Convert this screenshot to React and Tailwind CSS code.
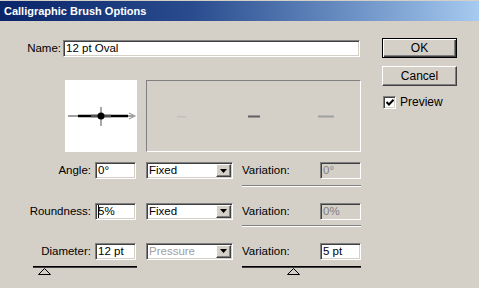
import React from "react";

const sunken =
  "border border-t-[#808080] border-l-[#808080] border-b-white border-r-white shadow-[inset_1px_1px_0_#404040,inset_-1px_-1px_0_#d4d0c8]";
const raised =
  "border border-t-white border-l-white border-b-[#404040] border-r-[#404040] shadow-[inset_-1px_-1px_0_#808080]";

function Field({ value, disabled, caret, className = "" }) {
  return (
    <div
      className={`flex h-[17px] items-center pl-[2px] ${sunken} ${
        disabled ? "bg-[#d4d0c8] text-[#808080]" : "bg-white text-black"
      } ${className}`}
    >
      {caret && <span className="mr-[-1px] h-[13px] w-[1px] bg-black" />}
      <span>{value}</span>
    </div>
  );
}

function Select({ value, disabled }) {
  return (
    <div className={`flex h-[17px] w-[87px] items-center bg-white ${sunken}`}>
      <span className={`flex-1 pl-[2px] ${disabled ? "text-[#a0a0a0]" : ""}`}>{value}</span>
      <span
        className={`m-[1px] flex h-[13px] w-[15px] items-center justify-center bg-[#d4d0c8] ${raised}`}
      >
        <svg width="7" height="4" viewBox="0 0 7 4">
          <path d="M0 0h7L3.5 4z" fill="#000" />
        </svg>
      </span>
    </div>
  );
}

function Slider({ width, knob }) {
  return (
    <div className="flex flex-col" style={{ width }}>
      <div className="h-[2px] border-t border-t-black border-b border-b-[#404040]" />
      <svg width="13" height="7" viewBox="0 0 13 7" style={{ marginLeft: knob }}>
        <path d="M6.5 0.5L12.5 6.5H0.5Z" fill="#d4d0c8" stroke="#000" strokeWidth="1" />
      </svg>
    </div>
  );
}

function ParamRow({ label, value, caret, mode, modeDisabled, variation, varDisabled, slider }) {
  return (
    <div className="flex items-start">
      <div className="flex flex-col">
        <div className="flex items-center">
          <span className="w-[91px] text-right">{label}</span>
          <Field value={value} caret={caret} className="ml-[4px] w-[41px]" />
          <div className="ml-[10px]">
            <Select value={mode} disabled={modeDisabled} />
          </div>
        </div>
        {slider && (
          <div className="ml-[33px] mt-[6px]">
            <Slider width={104} knob={5} />
          </div>
        )}
      </div>
      <div className="ml-[9px] flex w-[119px] flex-col">
        <div className="flex items-center">
          <span className="flex-1">Variation:</span>
          <Field value={variation} disabled={varDisabled} className="w-[41px]" />
        </div>
        {slider ? (
          <div className="mt-[6px]">
            <Slider width={119} knob={45} />
          </div>
        ) : (
          <div className="mt-[5px] h-[2px] border-t border-t-[#808080] border-b border-b-white" />
        )}
      </div>
    </div>
  );
}

export default function App() {
  return (
    <div className="h-[288px] w-[479px] overflow-hidden bg-[#d4d0c8] pt-[1px] font-['Liberation_Sans',Arial,sans-serif] text-[11.5px] text-black">
      {/* title bar */}
      <div className="flex h-[20px] items-center bg-gradient-to-r from-[#0a246a] via-[#2a4c8e] via-40% to-[#a6caf0] pl-[4px]">
        <span className="text-[11px] font-bold text-white">Calligraphic Brush Options</span>
      </div>

      <div className="flex">
        {/* left side */}
        <div className="flex w-[361px] flex-col">
          <div className="mt-[19px] flex items-center">
            <span className="w-[61px] text-right">Name:</span>
            <Field value="12 pt Oval" className="ml-[2px] w-[297px]" />
          </div>

          <div className="ml-[65px] mt-[23px] flex">
            <div className="h-[72px] w-[72px] bg-white">
              <svg width="72" height="72" viewBox="0 0 72 72">
                <line x1="36" y1="27" x2="36" y2="46" stroke="#a8a8a8" strokeWidth="2" />
                <line x1="3" y1="36" x2="69" y2="36" stroke="#a0a0a0" strokeWidth="2" />
                <line x1="13" y1="36" x2="63" y2="36" stroke="#000" strokeWidth="2.5" />
                <line x1="26" y1="36" x2="46" y2="36" stroke="#505050" strokeWidth="2.5" />
                <path d="M64 33L70 36L64 39" fill="none" stroke="#a0a0a0" strokeWidth="1.2" />
                <circle cx="36" cy="36" r="3.5" fill="#000" />
              </svg>
            </div>
            <div className="ml-[9px] h-[72px] w-[215px] border border-t-[#808080] border-l-[#808080] border-b-white border-r-white">
              <svg width="213" height="70" viewBox="0 0 213 70">
                <rect x="30" y="35" width="9" height="1.5" fill="#c0c0c0" />
                <rect x="101" y="34.5" width="12" height="2" fill="#606060" />
                <rect x="171" y="34.5" width="16" height="2" fill="#a0a0a0" />
              </svg>
            </div>
          </div>

          <div className="mt-[10px] flex flex-col gap-[16px]">
            <ParamRow label="Angle:" value="0°" mode="Fixed" variation="0°" varDisabled />
            <ParamRow label="Roundness:" value="5%" caret mode="Fixed" variation="0%" varDisabled />
            <ParamRow label="Diameter:" value="12 pt" mode="Pressure" modeDisabled variation="5 pt" slider />
          </div>
        </div>

        {/* right side */}
        <div className="ml-[21px] mt-[17px] flex w-[75px] flex-col">
          <button className="flex h-[20px] w-[75px] items-center justify-center border border-black bg-[#d4d0c8] shadow-[inset_1px_1px_0_#fff,inset_-1px_-1px_0_#404040,inset_-2px_-2px_0_#808080] text-[12px]">
            OK
          </button>
          <button className={`mt-[8px] flex h-[20px] w-[75px] items-center justify-center bg-[#d4d0c8] text-[12px] ${raised}`}>
            Cancel
          </button>
          <div className="mt-[7px] flex items-center">
            <span className={`ml-[1px] flex h-[13px] w-[13px] items-center justify-center bg-white ${sunken}`}>
              <svg width="8" height="7" viewBox="0 0 8 7">
                <path d="M0.5 3L3 5.5L7.5 0.8" fill="none" stroke="#000" strokeWidth="2" />
              </svg>
            </span>
            <span className="ml-[4px] text-[12px]">Preview</span>
          </div>
        </div>
      </div>
    </div>
  );
}
